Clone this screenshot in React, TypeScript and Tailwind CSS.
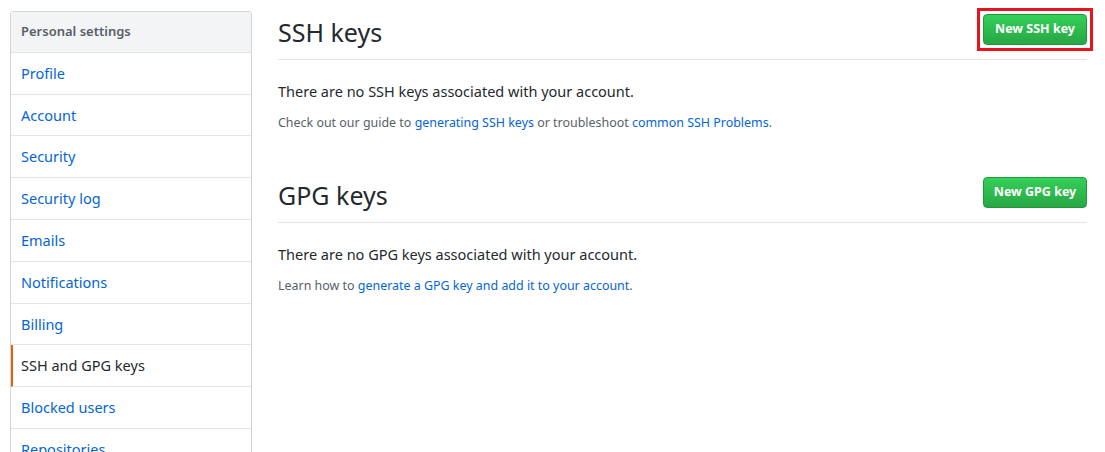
const menu = [
  "Profile",
  "Account",
  "Security",
  "Security log",
  "Emails",
  "Notifications",
  "Billing",
  "SSH and GPG keys",
  "Blocked users",
  "Repositories",
];

function Sidebar() {
  return (
    <nav className="w-[242px] shrink-0 self-start overflow-hidden rounded-[3px] border border-[#d1d5da] bg-white">
      <div className="flex h-[40.8px] items-center border-b border-[#e1e4e8] bg-[#f3f4f6] px-[10px] text-[13px] font-semibold text-[#586069]">
        Personal settings
      </div>
      {menu.map((item) => {
        const active = item === "SSH and GPG keys";
        return active ? (
          <div
            key={item}
            className="flex h-[41.8px] items-center border-b border-l-2 border-[#e1e4e8] border-l-[#e36209] pt-[1px] pl-[8px] text-[14.5px] text-[#24292e]"
          >
            {item}
          </div>
        ) : (
          <div
            key={item}
            className="flex h-[41.8px] items-center border-b border-[#e1e4e8] px-[10px] pt-[1px] text-[14.5px] text-[#0366d6]"
          >
            {item}
          </div>
        );
      })}
    </nav>
  );
}

function GreenButton({ label, marked }: { label: string; marked?: boolean }) {
  return (
    <div className="relative">
      <button
        type="button"
        className="h-[31px] w-[104px] rounded-[4px] border border-[#1f9a3a] bg-gradient-to-b from-[#34d058] to-[#28a745] text-[12.5px] font-bold text-white"
      >
        {label}
      </button>
      {marked && <span className="pointer-events-none absolute -inset-[6px] border-[3px] border-[#e8141d]" />}
    </div>
  );
}

function Subhead({ title, button, marked }: { title: string; button: string; marked?: boolean }) {
  return (
    <div className="flex items-start justify-between border-b border-[#e1e4e8] pb-[9px]">
      <h2 className="text-[25px] leading-[36px] font-normal text-[#24292e]">{title}</h2>
      <GreenButton label={button} marked={marked} />
    </div>
  );
}

export default function App() {
  return (
    <div
      className="flex h-[452px] w-[1105px] gap-[26px] overflow-hidden bg-white pt-[11px] pl-[10px]"
      style={{ fontFamily: '"Segoe UI", "Noto Sans", Roboto, sans-serif' }}
    >
      <Sidebar />
      <main className="w-[809px] pt-[3px]">
        <Subhead title="SSH keys" button="New SSH key" marked />
        <p className="mt-[21px] text-[14.5px] leading-[21px] text-[#24292e]">
          There are no SSH keys associated with your account.
        </p>
        <p className="mt-[12px] text-[12.45px] leading-[18px] text-[#586069]">
          Check out our guide to{" "}
          <a className="text-[#0366d6]">generating SSH keys</a> or troubleshoot{" "}
          <a className="text-[#0366d6]">common SSH Problems</a>.
        </p>

        <div className="mt-[45px]">
          <Subhead title="GPG keys" button="New GPG key" />
        </div>
        <p className="mt-[21px] text-[14.5px] leading-[21px] text-[#24292e]">
          There are no GPG keys associated with your account.
        </p>
        <p className="mt-[12px] text-[12.45px] leading-[18px] text-[#586069]">
          Learn how to <a className="text-[#0366d6]">generate a GPG key and add it to your account</a>.
        </p>
      </main>
    </div>
  );
}
